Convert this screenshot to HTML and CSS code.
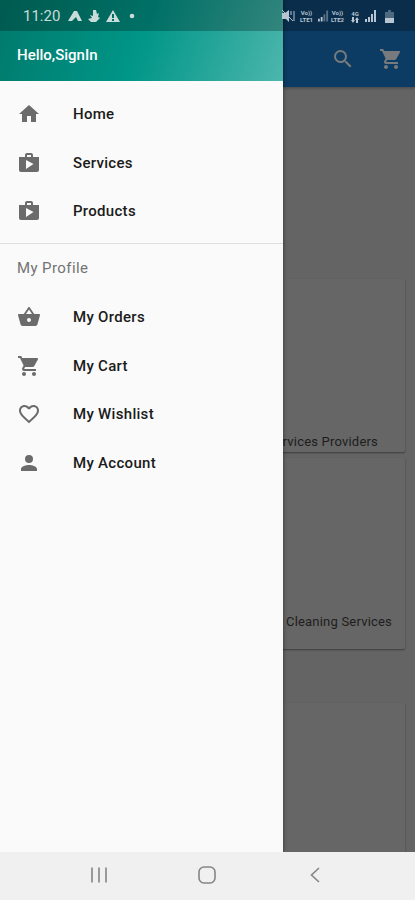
FILE: index.html
```
<!DOCTYPE html>
<html lang="en">
<head>
    <meta charset="UTF-8">
    <meta name="viewport" content="width=device-width, initial-scale=1.0">
    <title>Home Services</title>
    <link rel="stylesheet" href="styles.css">
</head>
<body>

    <div class="screen">
        <header class="appbar">
            <svg class="icon" viewBox="0 0 24 24"><path d="M15.5 14h-.79l-.28-.27A6.47 6.47 0 0 0 16 9.5 6.5 6.5 0 1 0 9.5 16c1.61 0 3.09-.59 4.23-1.57l.27.28v.79l5 4.99L20.49 19l-4.99-5zm-6 0a4.5 4.5 0 1 1 0-9 4.5 4.5 0 0 1 0 9z"/></svg>
            <svg class="icon" viewBox="0 0 24 24"><path d="M7 18c-1.1 0-1.99.9-1.99 2S5.9 22 7 22s2-.9 2-2-.9-2-2-2zM1 2v2h2l3.6 7.59-1.35 2.45c-.16.28-.25.61-.25.96 0 1.1.9 2 2 2h12v-2H7.42c-.14 0-.25-.11-.25-.25l.03-.12.9-1.63h7.45c.75 0 1.41-.41 1.75-1.03l3.58-6.49A1 1 0 0 0 20 4H5.21l-.94-2H1zm16 16c-1.1 0-1.99.9-1.99 2s.89 2 1.99 2 2-.9 2-2-.9-2-2-2z"/></svg>
        </header>

        <main class="content">
            <div class="card card-first"><span>Services Providers</span></div>
            <div class="card card-second"><span>Cleaning Services</span></div>
            <div class="card card-third"></div>
        </main>

        <nav class="drawer">
            <div class="drawer-header">Hello,SignIn</div>
            <ul class="menu">
                <li>
                    <svg class="icon" viewBox="0 0 24 24"><path d="M10 20v-6h4v6h5v-8h3L12 3 2 12h3v8z"/></svg>
                    <span>Home</span>
                </li>
                <li>
                    <svg class="icon" viewBox="0 0 24 24"><path d="M16 6V4c0-1.11-.89-2-2-2h-4c-1.11 0-2 .89-2 2v2H2v13c0 1.11.89 2 2 2h16c1.11 0 2-.89 2-2V6h-6zm-6-2h4v2h-4V4zM9 18V9l7.5 4L9 18z"/></svg>
                    <span>Services</span>
                </li>
                <li>
                    <svg class="icon" viewBox="0 0 24 24"><path d="M16 6V4c0-1.11-.89-2-2-2h-4c-1.11 0-2 .89-2 2v2H2v13c0 1.11.89 2 2 2h16c1.11 0 2-.89 2-2V6h-6zm-6-2h4v2h-4V4zM9 18V9l7.5 4L9 18z"/></svg>
                    <span>Products</span>
                </li>
            </ul>
            <h2>My Profile</h2>
            <ul class="menu menu-profile">
                <li>
                    <svg class="icon" viewBox="0 0 24 24"><path d="M17.21 9l-4.38-6.56a1 1 0 0 0-1.66.01L6.79 9H2c-.55 0-1 .45-1 1 0 .09.01.18.04.27l2.54 9.27A2 2 0 0 0 5.5 21h13a2 2 0 0 0 1.93-1.46l2.54-9.27L23 10c0-.55-.45-1-1-1h-4.79zM9 9l3-4.4L15 9H9zm3 8a2 2 0 1 1 0-4 2 2 0 0 1 0 4z"/></svg>
                    <span>My Orders</span>
                </li>
                <li>
                    <svg class="icon" viewBox="0 0 24 24"><path d="M7 18c-1.1 0-1.99.9-1.99 2S5.9 22 7 22s2-.9 2-2-.9-2-2-2zM1 2v2h2l3.6 7.59-1.35 2.45c-.16.28-.25.61-.25.96 0 1.1.9 2 2 2h12v-2H7.42c-.14 0-.25-.11-.25-.25l.03-.12.9-1.63h7.45c.75 0 1.41-.41 1.75-1.03l3.58-6.49A1 1 0 0 0 20 4H5.21l-.94-2H1zm16 16c-1.1 0-1.99.9-1.99 2s.89 2 1.99 2 2-.9 2-2-.9-2-2-2z"/></svg>
                    <span>My Cart</span>
                </li>
                <li>
                    <svg class="icon" viewBox="0 0 24 24"><path d="M16.5 3c-1.74 0-3.41.81-4.5 2.09C10.91 3.81 9.24 3 7.5 3 4.42 3 2 5.42 2 8.5c0 3.78 3.4 6.86 8.55 11.54L12 21.35l1.45-1.32C18.6 15.36 22 12.28 22 8.5 22 5.42 19.58 3 16.5 3zm-4.4 15.55l-.1.1-.1-.1C7.14 14.24 4 11.39 4 8.5 4 6.5 5.5 5 7.5 5c1.54 0 3.04.99 3.57 2.36h1.87C13.46 5.99 14.96 5 16.5 5c2 0 3.5 1.5 3.5 3.5 0 2.89-3.14 5.74-7.9 10.05z"/></svg>
                    <span>My Wishlist</span>
                </li>
                <li>
                    <svg class="icon" viewBox="0 0 24 24"><path d="M12 12a4 4 0 1 0 0-8 4 4 0 0 0 0 8zm0 2c-2.67 0-8 1.34-8 4v2h16v-2c0-2.66-5.33-4-8-4z"/></svg>
                    <span>My Account</span>
                </li>
            </ul>
        </nav>

        <div class="statusbar">
            <span class="clock">11:20</span>
            <svg class="notifications" viewBox="0 0 68 16">
                <path d="M0 13 6 3h3l5 10h-4L8 9l-2 2-2 2z"/>
                <path d="M25 2h3l1 4 2-1-1 4 2 1-4 4h-5l-3-3 4-1-2-3 3 1z"/>
                <path fill-rule="evenodd" d="M45 2 52 14H38zM44 6v4h2V6zm0 5v2h2v-2z"/>
                <circle cx="64" cy="8" r="2.3"/>
            </svg>
            <div class="system">
                <svg class="mute" viewBox="0 0 13 14"><path d="M0 4h3l4-3v12l-3-3H0z"/><path d="M0 1 11 12M9 2v4M12 2v10" fill="none" stroke="currentColor"/></svg>
                <div class="volte"><span>Vo))</span><span>LTE1</span></div>
                <svg class="signal signal-weak" viewBox="0 0 12 12"><path d="M0 9h2v3H0zM3 7h2v5H3z"/><path opacity=".45" d="M6 4h2v8H6zM9 0h2v12H9z"/></svg>
                <div class="volte"><span>Vo))</span><span>LTE2</span></div>
                <div class="volte network">
                    <span>4G</span>
                    <svg viewBox="0 0 10 6"><path d="M2 0h2v3h1L3 6 1 3h1zM7 0l2 3H8v3H6V3H5z"/></svg>
                </div>
                <svg class="signal" viewBox="0 0 12 12"><path d="M0 9h2v3H0zM3 7h2v5H3zM6 4h2v8H6zM9 0h2v12H9z"/></svg>
                <svg class="battery" viewBox="0 0 9 13"><path opacity=".4" d="M3 0h3v2h3v6H0V2h3z"/><path d="M0 8h9v5H0z"/></svg>
            </div>
        </div>

        <footer class="navbar">
            <svg viewBox="0 0 18 18"><path d="M2 1.5v15M9 1.5v15M16 1.5v15"/></svg>
            <svg viewBox="0 0 18 18"><rect x="1" y="1" width="16" height="16" rx="5"/></svg>
            <svg viewBox="0 0 18 18"><path d="M13 2 5.5 9l7.5 7"/></svg>
        </footer>
    </div>

</body>
</html>
```
FILE: styles.css
```
* {
    box-sizing: border-box;
}
body {
    margin: 0;
    font-family: Roboto, "Liberation Sans", sans-serif;
}
.screen {
    position: relative;
    display: flex;
    flex-direction: column;
    height: 900px;
    overflow: hidden;
    background: #646464;
}
.icon {
    width: 24px;
    height: 24px;
    flex: none;
    fill: currentColor;
}
.appbar {
    display: flex;
    justify-content: flex-end;
    align-items: center;
    gap: 24px;
    height: 87px;
    padding: 31px 12px 0 0;
    background: #0c3c63;
    color: #777b7d;
    box-shadow: 0 1px 3px rgba(0, 0, 0, 0.3);
}
.content {
    display: flex;
    flex-direction: column;
    align-items: flex-end;
    flex: 1;
    min-height: 0;
    padding: 192px 10px 0 0;
    overflow: hidden;
}
.card {
    display: flex;
    flex: none;
    justify-content: flex-end;
    align-items: flex-end;
    width: 194px;
    background: #666;
    border-radius: 2px;
    box-shadow: 0 1px 2px rgba(0, 0, 0, 0.4);
    color: #1d1d1d;
    font-size: 13px;
    letter-spacing: 0.2px;
    white-space: nowrap;
}
.card-first {
    height: 173px;
    padding: 0 27px 3px 0;
}
.card-second {
    height: 191px;
    margin-top: 6px;
    padding: 0 13px 20px 0;
}
.card-third {
    height: 191px;
    margin-top: 54px;
}
.drawer {
    position: absolute;
    top: 0;
    left: 0;
    bottom: 48px;
    width: 283px;
    background: #fafafa;
    box-shadow: 0 0 4px rgba(0, 0, 0, 0.5);
}
.drawer-header {
    height: 81px;
    padding: 46px 17px 0;
    background: linear-gradient(110deg, #00796b, #009688 50%, #4db6ac);
    color: #fff;
    font-size: 15px;
    font-weight: 500;
    line-height: 19px;
}
.menu {
    list-style: none;
    margin: 0;
    padding: 9px 0 8px;
    border-bottom: 1px solid #dedede;
}
.menu-profile {
    padding: 0;
    border-bottom: none;
}
.menu li {
    display: flex;
    align-items: center;
    gap: 32px;
    height: 48.4px;
    padding-left: 17px;
    color: #6b6b6b;
}
.menu span {
    color: #1b1b1b;
    font-size: 15px;
    font-weight: 500;
    letter-spacing: 0.3px;
}
h2 {
    margin: 0;
    padding-left: 17px;
    color: #737373;
    font-size: 15px;
    font-weight: 400;
    letter-spacing: 0.4px;
    line-height: 49px;
}
.statusbar {
    position: absolute;
    top: 0;
    left: 0;
    right: 0;
    display: flex;
    align-items: center;
    height: 31px;
    padding: 1px 21px 0 23px;
    background: rgba(0, 0, 0, 0.25);
    color: #c8dcda;
}
.statusbar svg {
    fill: currentColor;
}
.clock {
    width: 38px;
    font-size: 15px;
}
.notifications {
    width: 68px;
    height: 16px;
    margin-left: 7px;
}
.system {
    display: flex;
    align-items: center;
    gap: 4px;
    margin-left: auto;
    color: #b8c5d2;
}
.mute {
    width: 13px;
    height: 14px;
}
.volte {
    display: flex;
    flex-direction: column;
    align-items: center;
    width: 15px;
    font-size: 6px;
    font-weight: 700;
    line-height: 7px;
}
.network {
    width: 12px;
}
.network svg {
    width: 10px;
    height: 6px;
}
.signal {
    width: 12px;
    height: 12px;
}
.signal-weak {
    width: 11px;
    margin-right: -3px;
}
.battery {
    width: 9px;
    height: 13px;
    margin-left: 4px;
}
.navbar {
    position: relative;
    display: flex;
    justify-content: space-between;
    align-items: center;
    flex: none;
    height: 48px;
    padding: 0 91px 2px 90px;
    background: #f0f0f0;
}
.navbar svg {
    width: 18px;
    height: 18px;
    fill: none;
    stroke: #858585;
    stroke-width: 1.6;
}
```
